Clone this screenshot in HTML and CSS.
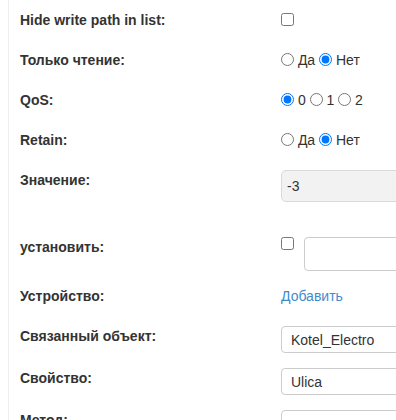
FILE: index.html
```
<!DOCTYPE html>
<html lang="ru">
<head>
  <meta charset="UTF-8">
  <meta name="viewport" content="width=device-width, initial-scale=1.0">
  <title>Свойства</title>
  <link rel="stylesheet" href="styles.css">
</head>
<body>
  <div class="panel">
    <!-- Path -->
    <div class="row">
      <div class="row-label">Hide write path in list:</div>
      <div class="row-value"><input type="checkbox" class="check"></div>
    </div>

    <div class="row">
      <div class="row-label">Только чтение:</div>
      <div class="row-value">
        <label><input type="radio" name="ro"> Да</label>
        <label><input type="radio" name="ro" checked> Нет</label>
      </div>
    </div>

    <div class="row">
      <div class="row-label">QoS:</div>
      <div class="row-value">
        <label><input type="radio" name="qos" checked> 0</label>
        <label><input type="radio" name="qos"> 1</label>
        <label><input type="radio" name="qos"> 2</label>
      </div>
    </div>

    <div class="row">
      <div class="row-label">Retain:</div>
      <div class="row-value">
        <label><input type="radio" name="retain"> Да</label>
        <label><input type="radio" name="retain" checked> Нет</label>
      </div>
    </div>

    <!-- Value -->
    <div class="row row-tall">
      <div class="row-label">Значение:</div>
      <div class="row-value">
        <input type="text" class="field field-disabled" value="-3" disabled>
      </div>
    </div>

    <div class="row row-set">
      <div class="row-label">установить:</div>
      <div class="row-value row-inline">
        <input type="checkbox" class="check check-set">
        <input type="text" class="field field-set">
      </div>
    </div>

    <!-- Links -->
    <div class="row">
      <div class="row-label">Устройство:</div>
      <div class="row-value"><a href="#" class="link">Добавить</a></div>
    </div>

    <div class="row row-obj">
      <div class="row-label">Связанный объект:</div>
      <div class="row-value"><input type="text" class="field field-sm" value="Kotel_Electro"></div>
    </div>

    <div class="row row-obj">
      <div class="row-label">Свойство:</div>
      <div class="row-value"><input type="text" class="field field-sm" value="Ulica"></div>
    </div>

    <div class="row row-obj">
      <div class="row-label">Метод:</div>
      <div class="row-value"><input type="text" class="field field-sm" value=""></div>
    </div>
  </div>
</body>
</html>
```

FILE: styles.css
```
* {
  box-sizing: border-box;
}

body {
  margin: 0;
  font-family: "Liberation Sans", Arial, sans-serif;
  font-size: 14px;
  color: #333;
  background: #fff;
  overflow: hidden;
}

.panel {
  margin-left: 8px;
  border-left: 1px solid #eee;
  padding: 10px 0 0 11px;
  min-height: 440px;
}

.row {
  display: flex;
  height: 40px;
}

.row-tall {
  height: 67px;
}

.row-set {
  height: 49px;
}

.row-obj {
  height: 42px;
}

.row-label {
  width: 261px;
  flex: none;
  font-weight: bold;
  line-height: 20px;
}

.row-value {
  line-height: 20px;
  white-space: nowrap;
}

.row-inline {
  display: flex;
  align-items: flex-start;
}

input[type="radio"],
input[type="checkbox"] {
  margin: 0;
  width: 13px;
  height: 13px;
  vertical-align: -1px;
}

.check {
  vertical-align: -2px;
}

.check-set {
  margin-top: 4px;
  flex: none;
}

/* Text fields */
.field {
  display: block;
  width: 320px;
  font-family: inherit;
  font-size: 14px;
  color: #333;
  background: #fff;
  border: 1px solid #ccc;
  border-radius: 4px;
  outline: none;
}

.field-disabled {
  height: 32px;
  padding: 0 5px;
  background: #f2f2f2;
  border-color: #dadada;
  border-radius: 5px;
  color: #333;
}

.field-set {
  height: 34px;
  margin-left: 10px;
  padding: 0 9px;
}

.field-sm {
  height: 27px;
  padding: 0 9px;
}

.link {
  color: #428bca;
  text-decoration: none;
}
```
